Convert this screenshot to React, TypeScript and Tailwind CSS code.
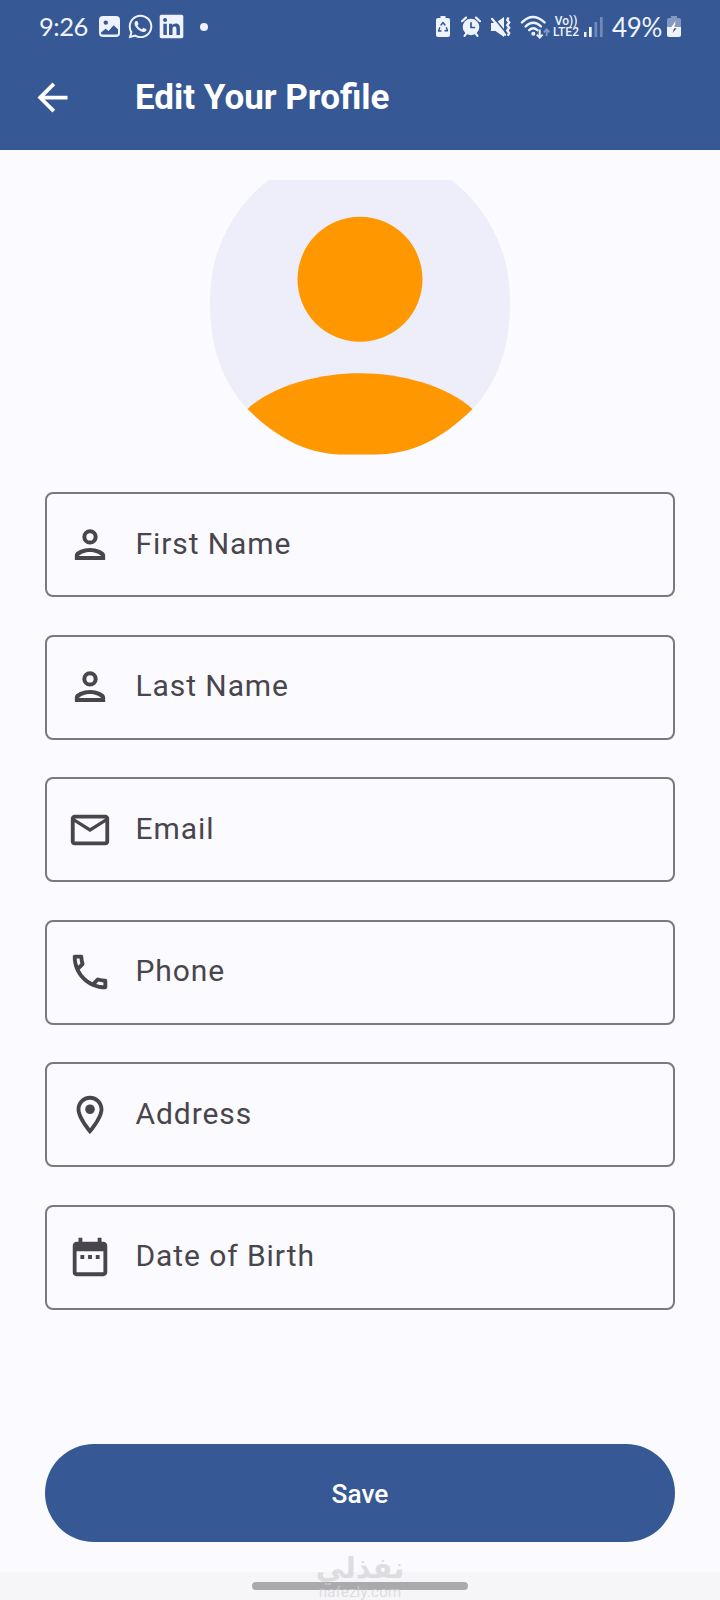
import React from 'react';
import { FaLinkedin, FaWhatsapp } from 'react-icons/fa';
import {
  MdArrowBack,
  MdDateRange,
  MdMailOutline,
  MdOutlineLocationOn,
  MdOutlinePhone,
} from 'react-icons/md';

const PersonIcon = ({ size }: { size: number }) => (
  <svg width={size} height={size} viewBox="0 0 24 24" fill="currentColor">
    <circle cx="12" cy="7.8" r="2.95" fill="none" stroke="currentColor" strokeWidth="2.1" />
    <path
      fillRule="evenodd"
      d="M4.1 19.8v-2.400C4.100 15.200 8.600 13.600 12 13.600s7.900 1.600 7.900 3.800v2.400zM6.200 17.800h11.600c-.8-1.100-3.500-2.100-5.800-2.100s-5 1-5.800 2.100z"
    />
  </svg>
);

const fields = [
  { label: 'First Name', icon: PersonIcon },
  { label: 'Last Name', icon: PersonIcon },
  { label: 'Email', icon: MdMailOutline },
  { label: 'Phone', icon: MdOutlinePhone },
  { label: 'Address', icon: MdOutlineLocationOn },
  { label: 'Date of Birth', icon: MdDateRange },
];

const GalleryIcon = () => (
  <svg width="21" height="21" viewBox="0 0 21 21" className="ml-[12px]">
    <rect width="21" height="21" rx="4" fill="currentColor" />
    <circle cx="6.8" cy="6.6" r="2.2" fill="#365894" />
    <path d="M2 16.5l4.600-3.800 3 2.200 5-5.600 4.400 4v3.600a1.500 1.500 0 0 1-1.500 1.500h-14A1.500 1.500 0 0 1 2 16.900z" fill="#365894" />
  </svg>
);

const SaverIcon = () => (
  <svg width="14" height="21" viewBox="0 0 14 21">
    <path d="M4.500 0h5v2H12a2 2 0 0 1 2 2v15a2 2 0 0 1-2 2H2a2 2 0 0 1-2-2V4a2 2 0 0 1 2-2h2.500z" fill="currentColor" />
    <path d="M4.700 9.500L7 6.500l2.300 3M10.300 11.300l1.200 3.500H8.500M5.500 15H2.500l1.400-3.700" fill="none" stroke="#365894" strokeWidth="1.4" strokeLinejoin="round" />
  </svg>
);

const AlarmIcon = () => (
  <svg width="20" height="21" viewBox="0 0 20 21" className="ml-[11px]">
    <circle cx="10" cy="11" r="8.3" fill="currentColor" />
    <path d="M1 5.200L5 1.600M19 5.200L15 1.600M3.600 19.800l2-2.600M16.400 19.800l-2-2.600" stroke="currentColor" strokeWidth="2.2" strokeLinecap="round" />
    <path d="M10 6.300v5.200h4.200" fill="none" stroke="#365894" strokeWidth="1.7" />
  </svg>
);

const MuteIcon = () => (
  <svg width="20" height="22" viewBox="0 0 20 22" className="ml-[10px]">
    <path d="M0 7h4.500L13 1v20l-8.500-6H0z" fill="currentColor" />
    <path d="M2.200 1l13 16" stroke="#365894" strokeWidth="1.5" />
    <path d="M1 2.800l13 16" stroke="currentColor" strokeWidth="2.2" strokeLinecap="round" />
    <path d="M17.600 1.500l-1.400 2.400 2 2.600-2 2.700 2 2.600-2 2.700 2 2.600-1.400 2.600" fill="none" stroke="currentColor" strokeWidth="2.3" />
  </svg>
);

const WifiIcon = () => (
  <svg width="30" height="24" viewBox="0 0 30 24" className="ml-[9px]">
    <g fill="none" stroke="currentColor" strokeWidth="2.4" strokeLinecap="round">
      <path d="M2 7.400Q12.800-3.400 24.500 7.400" />
      <path d="M5.600 11.500Q13.200 4 21 11.500" />
      <path d="M9.200 15.200Q13.200 11.400 17.400 15.200" />
    </g>
    <circle cx="13.3" cy="18.7" r="2" fill="currentColor" />
    <path d="M19.700 14.500v8M16.800 19.600l2.900 3 2.900-3" fill="none" stroke="currentColor" strokeWidth="2" />
    <path d="M26.700 21v-6.500M23.900 17.300l2.800-3 2.800 3" fill="none" stroke="#8198c6" strokeWidth="1.8" />
  </svg>
);

const SignalIcon = () => (
  <svg width="19" height="20" viewBox="0 0 19 20" className="ml-[5px]">
    <rect x="0" y="15" width="2.5" height="5" fill="currentColor" />
    <rect x="5" y="10" width="2.7" height="10" fill="currentColor" />
    <rect x="10.5" y="5" width="2.7" height="15" fill="#7189ba" />
    <rect x="16" y="0" width="2.7" height="20" fill="#7189ba" />
  </svg>
);

const ChargingIcon = () => (
  <svg width="14" height="21" viewBox="0 0 14 21" className="ml-[5px]">
    <path d="M4 0h6v2h2a2 2 0 0 1 2 2v7H0V4a2 2 0 0 1 2-2h2z" fill="#8499c0" />
    <path d="M0 11h14v8a2 2 0 0 1-2 2H2a2 2 0 0 1-2-2z" fill="currentColor" />
    <path d="M8.600 5L3.500 12.500h3.200L5.400 18l5.400-7H7.500z" fill="#fff" />
    <path d="M6.900 12.500l-1.200 4.500 4-5z" fill="#554a5c" />
  </svg>
);

const StatusBar = () => (
  <div className="flex h-[53px] items-center pl-[39px] font-[Lato] text-[#eef3ff]">
    <span className="w-[48px] text-[25.5px] leading-none tracking-[-0.5px]">9:26</span>
    <GalleryIcon />
    <FaWhatsapp className="ml-[7px] h-[27px] w-[27px]" />
    <FaLinkedin className="ml-[5px] h-[27px] w-[25px]" />
    <span className="ml-4 h-2 w-2 rounded-full bg-current" />
    <div className="ml-auto flex items-center pr-[39px]">
      <SaverIcon />
      <AlarmIcon />
      <MuteIcon />
      <WifiIcon />
      <div className="ml-[3px] flex w-[26px] flex-col items-center whitespace-nowrap font-[Roboto] text-[12px] font-medium leading-[11px]">
        <span>Vo))</span>
        <span>LTE2</span>
      </div>
      <SignalIcon />
      <span className="ml-[9px] w-[50px] whitespace-nowrap text-[26px] leading-none tracking-[-0.3px]">49%</span>
      <ChargingIcon />
    </div>
  </div>
);

const Avatar = () => (
  <svg width="300" height="275" viewBox="210 180 300 275" className="mx-auto mt-[30px] block">
    <clipPath id="avatar">
      <path d="M360 149A150 150 0 0 0 210 299V306C210 346 223 384 247.500 409C278 439 308 454.500 345 454.500H375C412 454.500 442 439 472.500 409C497 384 510 346 510 306V299A150 150 0 0 0 360 149z" />
    </clipPath>
    <g clipPath="url(#avatar)">
      <rect x="210" y="149" width="300" height="308" fill="#eeeefa" />
      <circle cx="360" cy="279.3" r="62.5" fill="#ff9800" />
      <path d="M247 409.500C272 386 318 373.300 360 373.300S448 386 473 409.500V457H247z" fill="#ff9800" />
    </g>
  </svg>
);

const App = () => {
  return (
    <div className="flex h-[1600px] w-[720px] flex-col overflow-hidden bg-[#fbfaff] font-[Roboto,sans-serif]">
      <header className="h-[150px] shrink-0 bg-[#365894] text-white">
        <StatusBar />
        <div className="flex h-[89px] items-center pl-[30px]">
          <MdArrowBack size={45} />
          <h1 className="ml-[60px] text-[35px] font-bold leading-none">Edit Your Profile</h1>
        </div>
      </header>

      <Avatar />

      {/* Form fields */}
      <form className="mx-[45px] mt-[37px] flex flex-col gap-[37.5px]">
        {fields.map(({ label, icon: Icon }) => (
          <div
            key={label}
            className="flex h-[105px] shrink-0 items-center rounded-[8px] border-2 border-[#7b7880] pl-[20px] text-[#48464c]"
          >
            <Icon size={46} />
            <span className="ml-[22.5px] pb-[2px] text-[30px] leading-none tracking-[0.92px]">{label}</span>
          </div>
        ))}
      </form>

      <button className="mx-[45px] mt-[134.5px] h-[97.5px] shrink-0 rounded-full bg-[#365894] pt-[3px] text-[26.25px] font-medium text-white">
        Save
      </button>

      {/* Gesture bar */}
      <div className="relative mt-auto h-[28px] bg-[#f6f5f8] pt-[10px]">
        <div className="mx-auto h-2 w-[216px] rounded-full bg-[#aaa9ab]" />
        <div className="absolute inset-x-0 top-[-22px] flex flex-col items-center text-[#d2d1d5]/70">
          <span dir="rtl" className="font-['DejaVu_Sans'] text-[29px] font-bold leading-[36px]">نفذلي</span>
          <span className="mt-[-2px] text-[15px] leading-[16px] tracking-[0.2px]">nafezly.com</span>
        </div>
      </div>
    </div>
  );
};

export default App;
